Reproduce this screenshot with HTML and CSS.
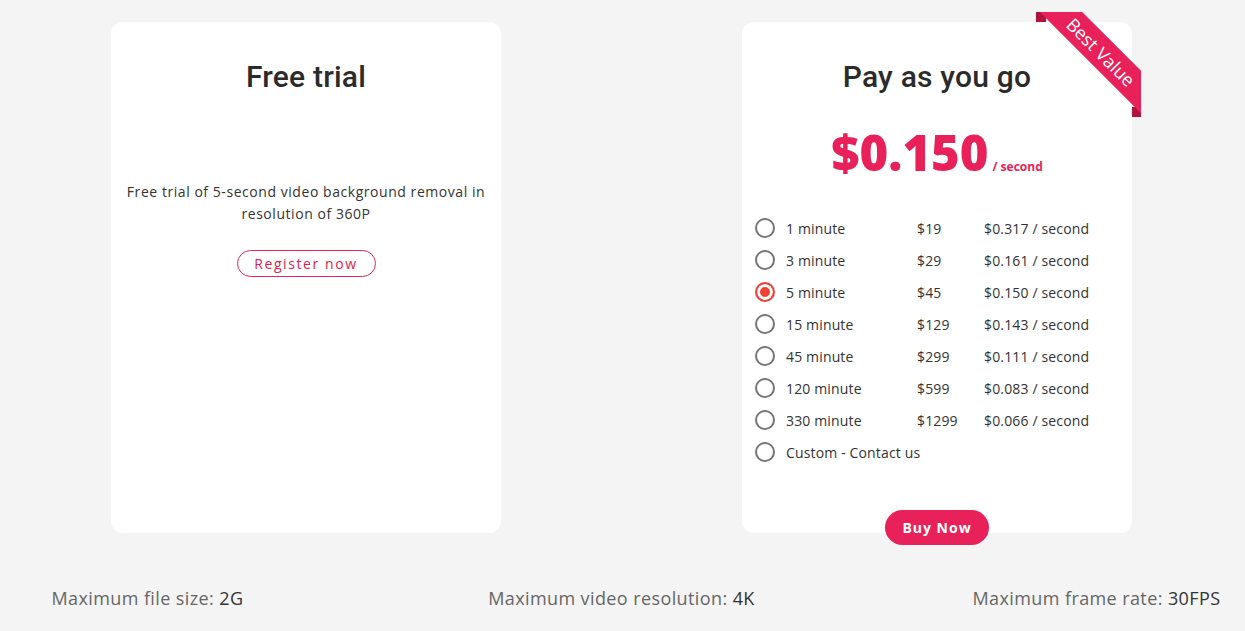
FILE: index.html
```html
<!DOCTYPE html>
<html lang="en">
<head>
<meta charset="utf-8">
<title>Pricing</title>
<link rel="stylesheet" href="styles.css">
</head>
<body>
<main class="plans">
  <section class="card">
    <h2 class="card-title">Free trial</h2>
    <p class="trial-text">Free trial of 5-second video background removal in resolution of 360P</p>
    <a class="btn-outline" href="#">Register now</a>
  </section>
  <section class="card card-paid">
    <div class="ribbon"><span>Best Value</span></div>
    <h2 class="card-title">Pay as you go</h2>
    <div class="price"><span class="price-num">$0.150</span><span class="price-unit">/ second</span></div>
    <ul class="options">
      <li class="option"><span class="radio"></span><span class="opt-name">1 minute</span><span class="opt-price">$19</span><span class="opt-rate">$0.317 / second</span></li>
      <li class="option"><span class="radio"></span><span class="opt-name">3 minute</span><span class="opt-price">$29</span><span class="opt-rate">$0.161 / second</span></li>
      <li class="option"><span class="radio checked"></span><span class="opt-name">5 minute</span><span class="opt-price">$45</span><span class="opt-rate">$0.150 / second</span></li>
      <li class="option"><span class="radio"></span><span class="opt-name">15 minute</span><span class="opt-price">$129</span><span class="opt-rate">$0.143 / second</span></li>
      <li class="option"><span class="radio"></span><span class="opt-name">45 minute</span><span class="opt-price">$299</span><span class="opt-rate">$0.111 / second</span></li>
      <li class="option"><span class="radio"></span><span class="opt-name">120 minute</span><span class="opt-price">$599</span><span class="opt-rate">$0.083 / second</span></li>
      <li class="option"><span class="radio"></span><span class="opt-name">330 minute</span><span class="opt-price">$1299</span><span class="opt-rate">$0.066 / second</span></li>
      <li class="option"><span class="radio"></span><span class="opt-name opt-wide">Custom - Contact us</span></li>
    </ul>
    <a class="btn-solid" href="#">Buy Now</a>
  </section>
</main>
<footer class="limits">
  <div class="limit"><span class="limit-label">Maximum file size:</span> <span class="limit-value">2G</span></div>
  <div class="limit"><span class="limit-label">Maximum video resolution:</span> <span class="limit-value">4K</span></div>
  <div class="limit"><span class="limit-label">Maximum frame rate:</span> <span class="limit-value">30FPS</span></div>
</footer>
</body>
</html>
```

FILE: styles.css
```css
* { box-sizing: border-box; }
html, body { margin: 0; padding: 0; }
body {
  background: #f4f4f4;
  font-family: "Open Sans", "Noto Sans", sans-serif;
  color: #333;
  overflow: hidden;
}
.plans {
  display: flex;
  gap: 241px;
  padding: 22px 0 0 111px;
}
.card {
  position: relative;
  width: 390px;
  height: 511px;
  background: #fff;
  border-radius: 12px;
  display: flex;
  flex-direction: column;
  align-items: center;
  padding: 37px 13px 0;
}
.card-title {
  margin: 0;
  font-family: Roboto, "Liberation Sans", sans-serif;
  font-weight: 500;
  font-size: 30px;
  line-height: 36px;
  letter-spacing: 0.2px;
  color: #2b2b2b;
}
.trial-text {
  margin: 86px 0 0;
  font-size: 14px;
  line-height: 22px;
  letter-spacing: 0.55px;
  text-align: center;
  color: #333;
}
.btn-outline {
  margin-top: 25px;
  width: 139px;
  height: 27px;
  border: 1px solid #e8245a;
  border-radius: 14px;
  color: #e02150;
  font-size: 14px;
  letter-spacing: 1.6px;
  text-decoration: none;
  display: flex;
  align-items: center;
  justify-content: center;
}
.price {
  margin-top: 27px;
  color: #e8215a;
  font-weight: 800;
  line-height: 60px;
}
.price-num {
  font-size: 49px;
}
.price-unit {
  font-size: 12px;
  font-weight: 700;
  margin-left: 4px;
}
.options {
  list-style: none;
  margin: 15px 0 0;
  padding: 0;
  align-self: stretch;
}
.option {
  display: flex;
  align-items: center;
  height: 32px;
  font-size: 14px;
  letter-spacing: 0.15px;
  color: #333;
}
.radio {
  width: 20px;
  height: 20px;
  border: 2px solid #767676;
  border-radius: 50%;
  margin-right: 11px;
  flex: none;
}
.radio.checked {
  border-color: #ef4136;
  background: #ef4136;
  box-shadow: inset 0 0 0 3px #fff;
}
.opt-name { width: 131px; }
.opt-wide { width: auto; }
.opt-price { width: 67px; }
.btn-solid {
  margin-top: auto;
  margin-bottom: -12px;
  width: 104px;
  height: 35px;
  border-radius: 18px;
  background: #e8215a;
  color: #fff;
  font-size: 14px;
  font-weight: 700;
  letter-spacing: 1px;
  text-decoration: none;
  display: flex;
  align-items: center;
  justify-content: center;
}
.ribbon {
  position: absolute;
  top: -10px;
  right: -9px;
  width: 105px;
  height: 105px;
  overflow: hidden;
}
.ribbon::before,
.ribbon::after {
  content: "";
  position: absolute;
  background: #b3123f;
}
.ribbon::before { top: 0; left: 0; width: 10px; height: 10px; }
.ribbon::after { bottom: 0; right: 0; width: 9px; height: 10px; }
.ribbon span {
  position: absolute;
  z-index: 1;
  left: -10px;
  top: 25px;
  width: 150px;
  height: 30px;
  line-height: 30px;
  background: #e8215a;
  color: #fff;
  text-align: center;
  font-size: 18px;
  font-weight: 400;
  transform: rotate(45deg);
}
.limits {
  display: grid;
  grid-template-columns: 295px 653px 297px;
  margin-top: 53px;
}
.limit {
  text-align: center;
  font-size: 18px;
  line-height: 24px;
  letter-spacing: 0.4px;
}
.limit-label { color: #666; }
.limit-value { color: #333; }
```
